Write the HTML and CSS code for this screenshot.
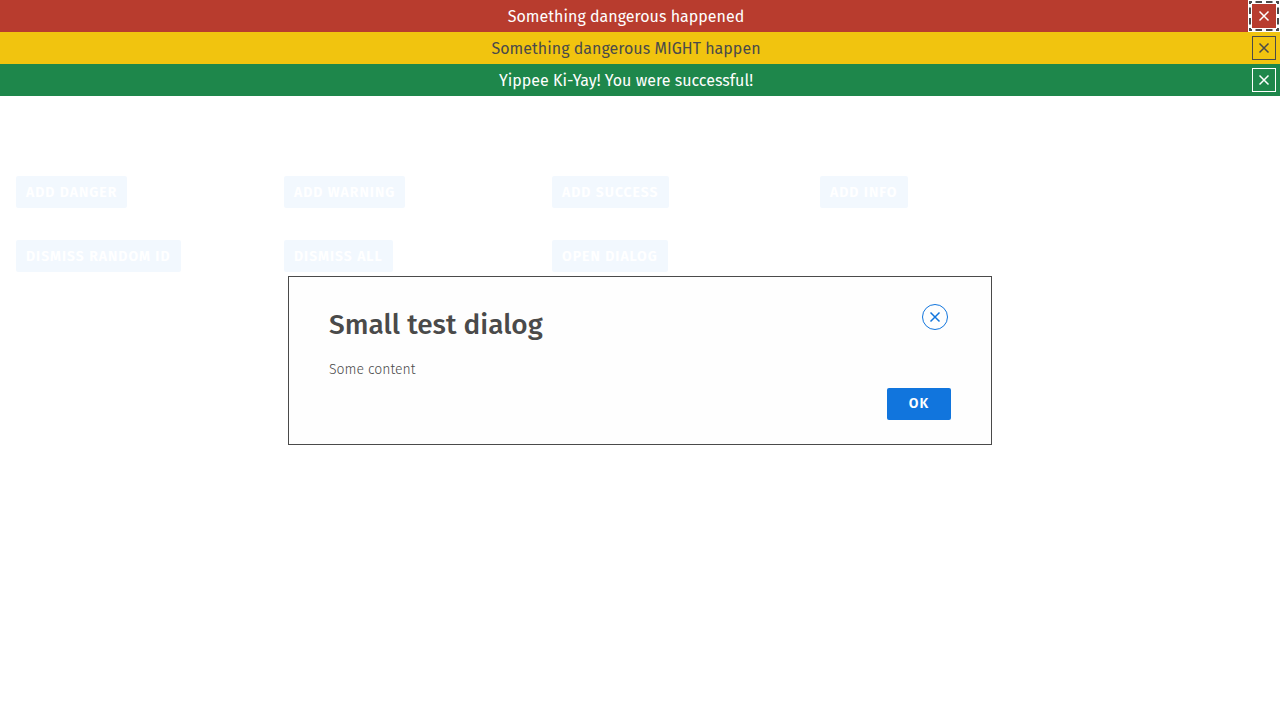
FILE: index.html
```html
<!DOCTYPE html>
<html lang="en">
<head>
<meta charset="utf-8">
<title>Notifications</title>
<link rel="stylesheet" href="styles.css">
</head>
<body>
<div class="notices">
  <div class="notice danger"><p class="message">Something dangerous happened</p><button class="dismiss focused" aria-label="Dismiss"><svg viewBox="0 0 10 10"><path d="M.5.5l9 9M9.5.5l-9 9"/></svg><svg class="ring" viewBox="0 0 30 30"><path d="M3 1H1V3M27 1H29V3M29 27V29H27M3 29H1V27M6.5 1H13M17 1H23.5M6.5 29H13M17 29H23.5M1 6.5V13M1 17V23.5M29 6.5V13M29 17V23.5"/></svg></button></div>
  <div class="notice warning"><p class="message">Something dangerous MIGHT happen</p><button class="dismiss" aria-label="Dismiss"><svg viewBox="0 0 10 10"><path d="M.5.5l9 9M9.5.5l-9 9"/></svg></button></div>
  <div class="notice success"><p class="message">Yippee Ki-Yay! You were successful!</p><button class="dismiss" aria-label="Dismiss"><svg viewBox="0 0 10 10"><path d="M.5.5l9 9M9.5.5l-9 9"/></svg></button></div>
</div>
<main class="actions">
  <button class="button">ADD DANGER</button>
  <button class="button">ADD WARNING</button>
  <button class="button">ADD SUCCESS</button>
  <button class="button">ADD INFO</button>
  <button class="button">DISMISS RANDOM ID</button>
  <button class="button">DISMISS ALL</button>
  <button class="button">OPEN DIALOG</button>
</main>
<div class="overlay">
  <section class="dialog" role="dialog" aria-labelledby="dialog-title">
    <header class="dialog-header">
      <h1 class="dialog-title" id="dialog-title">Small test dialog</h1>
      <button class="close" aria-label="Close"><svg viewBox="0 0 10 10"><path d="M.5.5l9 9M9.5.5l-9 9"/></svg></button>
    </header>
    <p class="dialog-content">Some content</p>
    <footer class="dialog-footer"><button class="button ok">OK</button></footer>
  </section>
</div>
</body>
</html>
```
FILE: styles.css
```css
* { box-sizing: border-box; }
body { margin: 0; height: 720px; overflow: hidden; background: #fefefe; color: #4a4a4a; font-family: "Fira Sans", "Noto Sans", sans-serif; }
button, p, h1 { margin: 0; padding: 0; font-family: inherit; }
svg { display: block; width: 10px; height: 10px; fill: none; stroke: currentColor; stroke-width: 1.5; overflow: visible; }
.notice { display: flex; align-items: center; height: 32px; padding-right: 4px; }
.danger { background: #b83c2e; color: #fefefe; }
.warning { background: #f1c40f; color: #4a4a4a; }
.success { background: #1e874b; color: #fefefe; }
.message { flex: 1; padding-top: 1px; font-size: 16px; line-height: 32px; letter-spacing: .02px; text-align: center; white-space: nowrap; }
.dismiss { position: relative; display: grid; place-items: center; flex: none; width: 24px; height: 24px; border: 1px solid currentColor; background: transparent; color: inherit; }
.focused { border-color: #b83c2e; background: #b83c2e; outline: none; box-shadow: 0 0 0 4px #fefefe; }
.ring { position: absolute; top: -4px; left: -4px; width: 30px; height: 30px; color: #4a4a4a; stroke-width: 2; }
.actions { display: grid; grid-template-columns: repeat(4, 236px); grid-auto-rows: 32px; gap: 32px; justify-items: start; padding: 80px 16px 0; }
.button { height: 32px; padding: 1px 10px 0; border: 0; border-radius: 2px; background: #1175dd; color: #fefefe; font-size: 14px; font-weight: 600; line-height: 31px; letter-spacing: 1px; white-space: nowrap; }
.overlay { position: fixed; inset: 96px 0 0; display: flex; justify-content: center; align-items: flex-start; padding-top: 180px; background: rgba(255, 255, 255, .95); }
.dialog { width: 704px; height: 169px; padding: 27px 40px 24px; border: 1px solid #4a4a4a; background: #fefefe; }
.dialog-header { display: flex; justify-content: space-between; height: 54px; padding-right: 3px; }
.dialog-title { font-size: 28px; font-weight: 500; line-height: 42px; letter-spacing: .02px; white-space: nowrap; }
.close { display: grid; place-items: center; width: 26px; height: 26px; border: 1px solid #1175dd; border-radius: 50%; background: transparent; color: #1175dd; }
.dialog-content { height: 30px; font-size: 14px; font-weight: 300; line-height: 24px; }
.dialog-footer { display: flex; justify-content: flex-end; }
.ok { width: 64px; padding: 0 0 1px; }
```
